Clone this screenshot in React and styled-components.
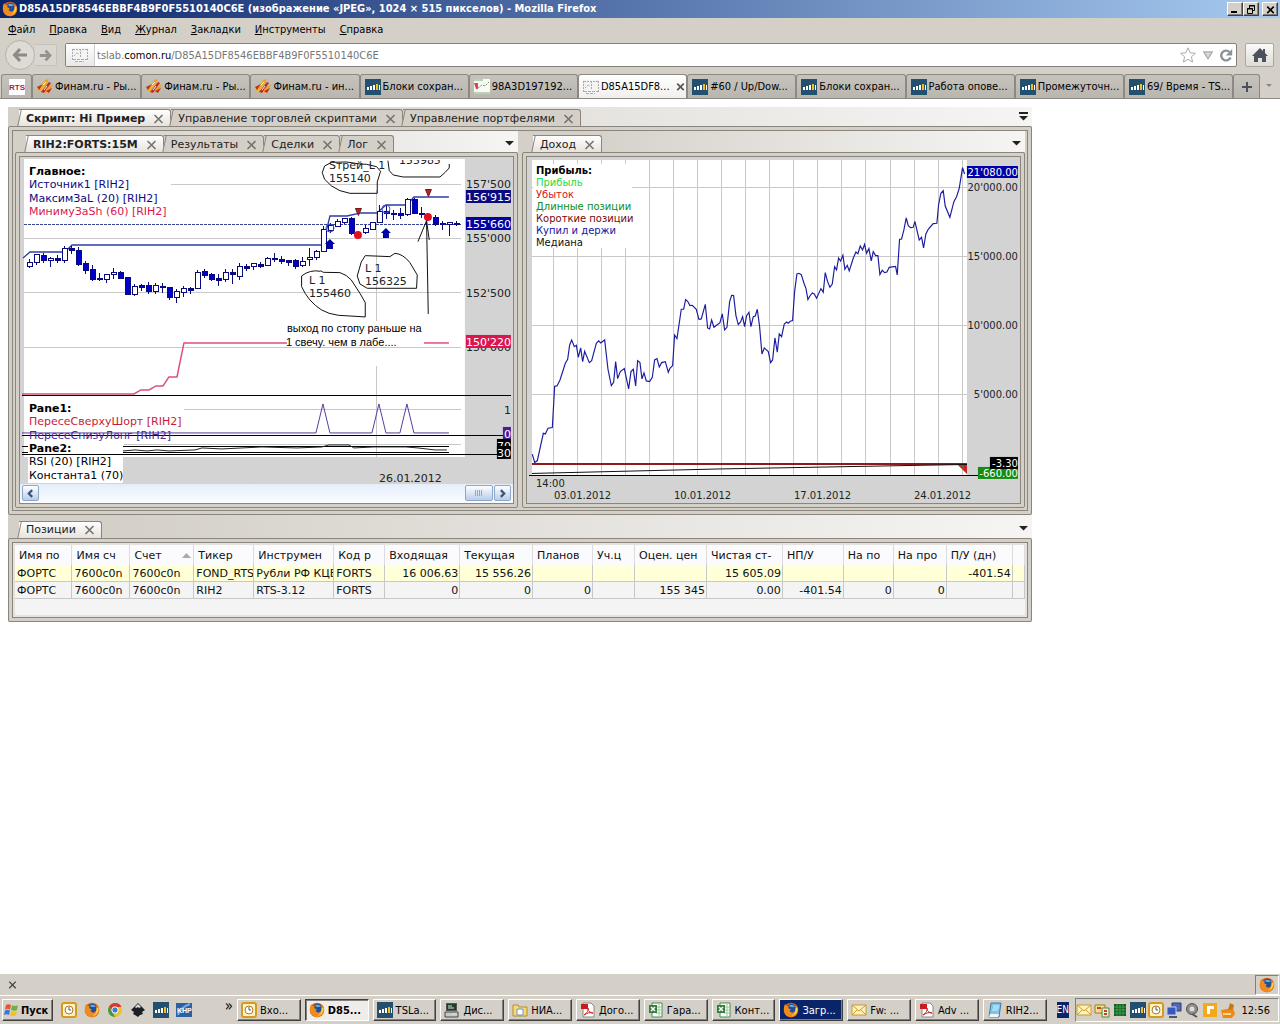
import React from 'react';
import styled, { createGlobalStyle, css } from 'styled-components';

const colors = {
  face: '#d4d0c8',
  edge: '#8a867e',
  dark: '#404040',
  navy: '#0a246a',
  axis: '#d3d3d3',
  grid: '#c8c8c8',
  blue: '#0000a8',
  deepBlue: '#0a0a80',
  crimson: '#dc1450',
};

const uiFont = '"DejaVu Sans Condensed", "Liberation Sans", sans-serif';
const appFont = '"DejaVu Sans", sans-serif';

const GlobalStyle = createGlobalStyle`
  * {
    box-sizing: border-box;
  }
  body {
    margin: 0;
    background: #fff;
    font-family: ${uiFont};
    font-size: 11px;
    color: #000;
  }
  button, input {
    font: inherit;
    color: inherit;
  }
  button {
    cursor: pointer;
  }
  svg {
    display: block;
    flex: none;
  }
`;

const raised = css`
  border: 1px solid;
  border-color: #fff ${colors.dark} ${colors.dark} #fff;
  box-shadow: inset -1px -1px 0 #808080;
`;

const sunken = css`
  border: 1px solid;
  border-color: #808080 #fff #fff #808080;
`;

const Page = styled.div`
  display: flex;
  flex-direction: column;
  min-height: 100vh;
`;

/* ---------- browser window ---------- */

const TitleBar = styled.header`
  display: flex;
  align-items: center;
  gap: 1px;
  height: 18px;
  padding: 0 2px;
  background: linear-gradient(90deg, ${colors.navy}, #a6caf0);
`;

const WindowTitle = styled.h1`
  flex: 1;
  margin: 0;
  overflow: hidden;
  font-size: 11px;
  line-height: 18px;
  white-space: nowrap;
  color: #fff;
`;

const WindowButtons = styled.div`
  display: flex;
`;

const WindowButton = styled.button`
  display: flex;
  align-items: center;
  justify-content: center;
  width: 16px;
  height: 14px;
  padding: 0;
  margin-left: ${({ $apart }) => ($apart ? 3 : 0)}px;
  background: ${colors.face};
  ${raised};
`;

const MenuBar = styled.nav`
  display: flex;
  height: 24px;
  padding: 0 1px;
  background: ${colors.face};
`;

const MenuItem = styled.button`
  padding: 0 7px;
  border: 0;
  background: none;
  line-height: 22px;
`;

const NavBar = styled.div`
  display: flex;
  align-items: flex-start;
  gap: 8px;
  height: 32px;
  padding: 1px 6px 0 5px;
  background: ${colors.face};
`;

const HistoryButtons = styled.div`
  display: flex;
  align-items: center;
  height: 24px;
`;

const HistoryButton = styled.button`
  display: flex;
  align-items: center;
  justify-content: center;
  padding: 0;
  width: ${({ $back }) => ($back ? 30 : 22)}px;
  height: ${({ $back }) => ($back ? 30 : 22)}px;
  border: 1px solid ${({ $back }) => ($back ? '#b5b2ac' : '#c6c2bb')};
  border-left-width: ${({ $back }) => ($back ? 1 : 0)}px;
  border-radius: ${({ $back }) => ($back ? '50%' : '0 2px 2px 0')};
  background: ${({ $back }) => ($back ? '#dedbd5' : '#d9d6cf')};
`;

const AddressBar = styled.div`
  display: flex;
  flex: 1;
  align-items: center;
  height: 24px;
  border: 1px solid #84817b;
  border-radius: 2px;
  background: #fff;
`;

const SiteIdentity = styled.span`
  display: flex;
  align-items: center;
  justify-content: center;
  width: 29px;
  height: 22px;
  border-right: 1px solid #ccc;
  background: linear-gradient(#fff, #e8e8e8);
`;

const Address = styled.div`
  flex: 1;
  padding: 0 2px;
  color: #777;

  b {
    font-weight: normal;
    color: #000;
  }
`;

const AddressTools = styled.div`
  display: flex;
  align-items: center;
  gap: 7px;
  padding-right: 3px;
`;

const HomeButton = styled.button`
  display: flex;
  align-items: center;
  justify-content: center;
  width: 29px;
  height: 24px;
  padding: 0;
  border: 1px solid #aaa7a1;
  border-radius: 2px;
  background: linear-gradient(#fafafa, #dedbd5);
`;

const BrowserTabs = styled.div`
  display: flex;
  height: 25px;
  padding: 0 2px 0 1px;
  border-bottom: 1px solid #8c8983;
  background: ${colors.face};
`;

const BrowserTab = styled.button`
  display: flex;
  flex: ${({ $pinned }) => ($pinned ? 'none' : '1 1 0')};
  align-items: center;
  justify-content: ${({ $pinned }) => ($pinned ? 'center' : 'flex-start')};
  gap: 2px;
  min-width: 0;
  width: ${({ $pinned }) => $pinned || 'auto'};
  padding: ${({ $pinned }) => ($pinned ? '0' : '0 1px 0 4px')};
  border: 1px solid #8c8983;
  border-bottom: 0;
  border-radius: 3px 3px 0 0;
  background: ${({ $active }) =>
    $active ? 'linear-gradient(#fff, #f0efec)' : 'linear-gradient(#c6c3bd, #b9b6b0)'};
  white-space: nowrap;

  span {
    flex: 1;
    text-align: left;
  }
`;

const TabListArrow = styled.button`
  display: flex;
  align-items: center;
  justify-content: center;
  width: 18px;
  padding: 0;
  border: 0;
  background: none;
`;

const Viewport = styled.main`
  flex: 1;
  padding: 8px;
  background: #fff;
`;

const AddonBar = styled.div`
  display: flex;
  align-items: center;
  justify-content: space-between;
  height: 21px;
  padding: 0 1px 0 8px;
  background: ${colors.face};
`;

const PlainButton = styled.button`
  display: flex;
  align-items: center;
  justify-content: center;
  padding: 0;
  border: 0;
  background: none;
`;

const AddonButton = styled(PlainButton)`
  width: 24px;
  height: 20px;
  ${sunken};
`;

/* ---------- trading terminal ---------- */

const Terminal = styled.section`
  width: 81%;
  background: ${colors.face};
  font-family: ${appFont};
  color: #222;
`;

const Strip = styled.div`
  display: flex;
  align-items: flex-end;
  height: ${({ $height }) => $height}px;
  padding: 0 4px 0 11px;
  background: linear-gradient(90deg, ${colors.face} 10%, #f6f5f4);
`;

const DockTab = styled.button`
  position: relative;
  display: flex;
  align-items: center;
  gap: 8px;
  height: 17px;
  padding: 0 6px 0 7px;
  border: 1px solid ${colors.edge};
  border-width: 1px 1px 0 0;
  border-radius: 0 3px 0 0;
  background: ${({ $active }) => ($active ? 'linear-gradient(#fff, #e6e3de)' : colors.face)};
  font-weight: ${({ $bold }) => ($bold ? 'bold' : 'normal')};
  line-height: 15px;
  white-space: nowrap;

  &::before {
    content: '';
    position: absolute;
    top: 0;
    bottom: 0;
    left: 0;
    width: 3px;
    border-left: 1px solid ${colors.edge};
    background: inherit;
    transform: skewX(-12deg);
  }
`;

const StripMenu = styled(PlainButton)`
  align-self: center;
  margin-left: auto;
`;

const Frame = styled.div`
  padding: 3px;
  border: 1px solid ${colors.edge};
  border-radius: 2px;
  background: ${colors.face};
`;

const FrameInner = styled.div`
  padding: ${({ $pad }) => $pad || 0};
  border: 1px solid ${colors.edge};
  background: ${({ $fill }) => $fill || colors.face};
`;

const Columns = styled.div`
  display: grid;
  grid-template-columns: 1fr 1fr;
  gap: 4px;
`;

const Chart = styled.svg`
  width: 100%;
  height: auto;
  font-family: ${appFont};
  font-size: ${({ $size }) => $size}px;
`;

const ScrollTrack = styled.div`
  display: flex;
  align-items: center;
  justify-content: space-between;
  height: 19px;
  padding: 0 2px;
  background: linear-gradient(#e4eefb, #fafcff);
`;

const ScrollGroup = styled.div`
  display: flex;
  gap: 1px;
`;

const ScrollButton = styled.button`
  display: flex;
  align-items: center;
  justify-content: center;
  width: ${({ $wide }) => ($wide ? 28 : 17)}px;
  height: 16px;
  padding: 0;
  border: 1px solid #8ea6c8;
  border-radius: 2px;
  background: linear-gradient(#fff, #b8cdea);
`;

const GridArea = styled.div`
  padding-bottom: 16px;
  background: #f4f4f4;
`;

const Grid = styled.table`
  width: 100%;
  table-layout: fixed;
  border-collapse: collapse;
  color: #111;
`;

const HeadCell = styled.th`
  height: 20px;
  padding: 2px 2px 0 4px;
  overflow: hidden;
  border-right: 1px solid #dcdcdc;
  background: #fbfbfd;
  font-weight: normal;
  text-align: left;
  white-space: nowrap;

  svg {
    float: right;
    margin-top: 4px;
  }
`;

const Row = styled.tr`
  background: ${({ $selected }) => ($selected ? '#ffffd8' : '#f4f4f4')};
`;

const Cell = styled.td`
  height: 17px;
  padding: 2px 1px 0 2px;
  overflow: hidden;
  border: 1px solid #c8c8c8;
  border-width: 0 1px 1px 0;
  line-height: 14px;
  text-align: ${({ $number }) => ($number ? 'right' : 'left')};
  white-space: nowrap;
`;

/* ---------- taskbar ---------- */

const Taskbar = styled.footer`
  display: flex;
  align-items: center;
  height: 29px;
  padding: 0 1px 0 2px;
  border-top: 1px solid #fff;
  background: ${colors.face};
`;

const StartButton = styled.button`
  display: flex;
  align-items: center;
  gap: 1px;
  height: 22px;
  width: 51px;
  padding: 0 1px;
  background: ${colors.face};
  font-size: 11px;
  font-weight: bold;
  ${raised};
`;

const QuickLaunch = styled.div`
  display: flex;
  align-items: center;
  gap: 7px;
  width: 184px;
  padding-left: 8px;
`;

const More = styled(PlainButton)`
  margin-left: auto;
  padding: 0 4px 8px 0;
  font-size: 15px;
  line-height: 12px;
`;

const Tasks = styled.div`
  display: flex;
  flex: 1;
  gap: 4px;
  min-width: 0;
`;

const Task = styled.button`
  display: flex;
  flex: 1 1 0;
  align-items: center;
  gap: 3px;
  min-width: 0;
  height: 22px;
  padding: 0 3px;
  overflow: hidden;
  background: ${({ $alert }) => ($alert ? colors.navy : colors.face)};
  color: ${({ $alert }) => ($alert ? '#fff' : '#000')};
  white-space: nowrap;
  ${raised};
  ${({ $active }) =>
    $active &&
    css`
      border-color: ${colors.dark} #fff #fff ${colors.dark};
      box-shadow: inset 1px 1px 0 #808080;
      background: #efedea;
      font-weight: bold;
    `};
`;

const Language = styled.span`
  margin: 0 6px 0 10px;
  background: ${colors.navy};
  color: #fff;
  font-size: 10px;
  line-height: 16px;
`;

const Tray = styled.div`
  display: flex;
  align-items: center;
  gap: 2px;
  width: 204px;
  height: 24px;
  padding: 0 8px 0 0;
  ${sunken};

  time {
    margin-left: auto;
  }
`;

/* ---------- icons ---------- */

const Icon = ({ size = 16, children }) => (
  <svg width={size} height={size} viewBox="0 0 16 16" aria-hidden="true">
    {children}
  </svg>
);

const icons = {
  firefox: (
    <>
      <circle cx="8" cy="8" r="7.3" fill="#d9620c" />
      <circle cx="8.4" cy="6.4" r="4.6" fill="#1d4f9c" />
      <path d="M6 3.6c2-1.7 5-.8 6 1.3-1.600-.6-2 .4-3.300.2S6.600 5 6 3.600z" fill="#69a7dc" />
      <path d="M1 5l1-3 1.500 2L6 4.200 5 6l2.800 1.600L6.500 9l2 1.600c2.200.3 4.200-1.600 4.100-4.400L12 3l2.500 2.600c1.600 5-2 9.500-6.500 9.600C3 15.100.300 10.500 1 5z" fill="#f08a1c" />
      <path d="M14.300 5.400c.9 4-1.600 7.600-5.500 8.300 2.500-1.600 4.200-3.700 3.700-7.500z" fill="#ffd24a" />
    </>
  ),
  finam: (
    <>
      <path d="M0 11l9-10 2 1-7 11z" fill="#e8b428" />
      <path d="M4 13l8-10 2 1-7 10z" fill="#c8282c" />
      <path d="M8 1l4-1-3 6-2-2zM9 10l7-5-2 5-5 4z" fill="#e9a51c" />
      <path d="M0 8l6-3-4 6zM9 12l6-3-3 5z" fill="#c03020" />
      <path d="M6 6l3-3M7 11l3-4" stroke="#fff4dc" />
    </>
  ),
  tslab: (
    <>
      <path d="M0 0h16v16H0z" fill="#22506e" />
      <path d="M2 8h2v3H2zM5 7h2v4H5zM8 6h2v5H8zM14 6h1v5h-1z" fill="#fff" />
      <path d="M11 5h2v6h-2z" fill="#f0c020" />
    </>
  ),
  picture: (
    <>
      <path d="M0 1h16v13H0z" fill="#f4f4f4" />
      <path d="M1 2.500h14M8.500 2v9M2 9l3-3 2 1M15.500 2v11M.500 2v11" fill="none" stroke="#aaa" strokeDasharray="2 1" />
      <path d="M1 12.500h14M3 14.500h9" stroke="#aaa" strokeDasharray="3 1" />
    </>
  ),
  graph: (
    <>
      <path d="M0 0h16v15H0z" fill="#f8faf4" />
      <path d="M0 4h4v6H2z" fill="#d84848" />
      <path d="M4 9l4-3 3 1 4-4" fill="none" stroke="#7d9c78" strokeDasharray="2 1" />
      <path d="M0 1h9M0 14h16" stroke="#7aa874" />
    </>
  ),
  outlook: (
    <>
      <rect x="1" y="1" width="14" height="14" rx="2" fill="#fff3c4" stroke="#d79a20" strokeWidth="2" />
      <circle cx="8" cy="8" r="4" fill="#fff" stroke="#a87824" />
      <path d="M8 5v3h2" fill="none" stroke="#555" />
    </>
  ),
  chrome: (
    <>
      <circle cx="8" cy="8" r="7" fill="#e8c32c" />
      <path d="M2 4.500A7 7 0 0 1 14.500 5H8L5 9z" fill="#d8382c" />
      <path d="M2 4.500l3.500 5.500L8 15A7 7 0 0 1 2 4.500z" fill="#3a9c48" />
      <circle cx="8" cy="8" r="3.200" fill="#3c7cd0" stroke="#fff" />
    </>
  ),
  inkscape: (
    <>
      <path d="M8 1l7 7-3 2 1 2-3 1-2 2-3-2-2-1 1-2-3-2z" fill="#1c2024" />
      <path d="M8 2l3 3-2 1-1-1-2 1-1-1z" fill="#d8e0e8" />
    </>
  ),
  khp: (
    <>
      <path d="M0 1h16v14H0z" fill="#2a62a4" />
      <path d="M2 13C4 7 8 4 14 2" fill="none" stroke="#7cacdc" strokeWidth="2" />
      <text x="1" y="11" fill="#fff" fontFamily="Liberation Sans" fontSize="7" fontWeight="bold">KHP</text>
    </>
  ),
  computer: (
    <>
      <path d="M2 1h11v8H2z" fill="#555" />
      <path d="M3 2h9v6H3z" fill="#1d3d2d" />
      <path d="M1 10h13v5H1z" fill="#c8c8c8" stroke="#444" />
      <path d="M4 4h4M4 6h6M8 12h5" stroke="#d7e8d7" />
    </>
  ),
  folder: (
    <>
      <path d="M1 3h5l1 2h8v9H1z" fill="#f6d978" stroke="#b98d20" />
      <path d="M5 7h6v6H5z" fill="#fff" stroke="#679bc8" />
    </>
  ),
  pdf: (
    <>
      <path d="M3 1h8l3 3v11H3z" fill="#fff" stroke="#888" />
      <path d="M1 2h7v5H1z" fill="#c81c1c" />
      <path d="M4 13c3-2 5-5 4-7-1 2 2 5 5 5-3-1-6 0-9 2z" fill="none" stroke="#c81c1c" />
    </>
  ),
  excel: (
    <>
      <path d="M4 1h10v14H4z" fill="#fff" stroke="#4a8a50" />
      <path d="M8 5h6M8 8h6M8 11h6M11 2v12" stroke="#9cc49c" />
      <path d="M1 3h8v8H1z" fill="#2f8038" />
      <path d="M3 5l4 4M7 5L3 9" stroke="#fff" strokeWidth="1.500" />
    </>
  ),
  mail: (
    <>
      <path d="M1 3h14v10H1z" fill="#fff2b8" stroke="#c99a30" />
      <path d="M1 3l7 6 7-6M1 13l5-5M15 13l-5-5" fill="none" stroke="#c99a30" />
    </>
  ),
  note: (
    <>
      <path d="M4 1h10l-2 14H2z" fill="#7cc4e8" stroke="#3c7ca8" />
      <path d="M6 4h6M6 6h6M5 8h6" stroke="#d8f0fc" />
      <path d="M3 12h9l-1 3H2z" fill="#eef6fa" />
    </>
  ),
  windows: (
    <>
      <path d="M2 3c2-1 3-1 5 0L6 7.500c-2-1-3-1-5 0z" fill="#e8522c" />
      <path d="M8 3.300c2 1 4 1 6 0L13 8c-2 1-4 1-6 0z" fill="#68b43c" />
      <path d="M1 8.500c2-1 3-1 5 0L5 13c-2-1-3-1-5 0z" fill="#3c78d0" />
      <path d="M7 9c2 1 4 1 6 0l-1 4.500c-2 1-4 1-6 0z" fill="#f0c030" />
    </>
  ),
  keys: (
    <>
      <path d="M1 3h10v8H1z" fill="#f6e084" stroke="#a07820" />
      <path d="M8 6h7v9H8z" fill="#e8f0d0" stroke="#508838" />
      <path d="M3 6h4M10 9h3M10 12h3" stroke="#c84030" strokeWidth="2" />
    </>
  ),
  board: (
    <>
      <path d="M2 2h12v12H2z" fill="#145c20" />
      <path d="M2 5h12M2 8h12M2 11h12M5 2v12M8 2v12M11 2v12" stroke="#3ca048" />
    </>
  ),
  network: (
    <>
      <path d="M6 1h9v8H6z" fill="#5068b8" stroke="#303c70" />
      <path d="M1 5h9v8H1z" fill="#3858c0" stroke="#c8d0e8" />
      <path d="M3 15h8" stroke="#505868" strokeWidth="2" />
    </>
  ),
  sound: (
    <>
      <circle cx="8" cy="7" r="5.500" fill="#8c8c8c" stroke="#555" />
      <circle cx="8" cy="7" r="2.500" fill="#ddd" />
      <path d="M8 12l5 3" stroke="#555" strokeWidth="2" />
    </>
  ),
  card: (
    <>
      <path d="M1 1h14v14H1z" fill="#f4a81c" />
      <path d="M5 4h7v3H8v5H5z" fill="#fff" />
    </>
  ),
  bag: (
    <>
      <path d="M1 8l12-2 2 6-3 4H3z" fill="#f08818" />
      <path d="M8 8l2-7 4 2-1 4z" fill="#c87810" />
      <path d="M3 12h8" stroke="#ffd890" strokeWidth="2" />
    </>
  ),
  rts: (
    <>
      <path d="M0 0h16v16H0z" fill="#fff" />
      <text x="0" y="11" fill="#b8183c" fontFamily="Liberation Sans" fontSize="8" fontWeight="bold">RTS</text>
    </>
  ),
};

const Cross = ({ size = 11, color = '#76726c', width = 1.6 }) => (
  <svg width={size} height={size} viewBox="0 0 11 11" aria-hidden="true">
    <path d="M1.500 2l8 8M9.500 2l-8 8" stroke={color} strokeWidth={width} />
  </svg>
);

const Down = ({ double }) => (
  <svg width="9" height="9" viewBox="0 0 9 9" fill="#222" aria-hidden="true">
    {double && <path d="M0 0h9v2H0z" />}
    <path d="M0 4h9L4.500 8.500z" />
  </svg>
);

/* ---------- data ---------- */

const menu = ['Файл', 'Правка', 'Вид', 'Журнал', 'Закладки', 'Инструменты', 'Справка'];

const browserTabs = [
  ['finam', 'Финам.ru - Ры...'],
  ['finam', 'Финам.ru - Ры...'],
  ['finam', 'Финам.ru - ин...'],
  ['tslab', 'Блоки сохран...'],
  ['graph', '98A3D197192...'],
  ['picture', 'D85A15DF8...', true],
  ['tslab', '#60 / Up/Dow...'],
  ['tslab', 'Блоки сохран...'],
  ['tslab', 'Работа опове...'],
  ['tslab', 'Промежуточн...'],
  ['tslab', '69/ Время - TS...'],
];

const tasks = [
  ['outlook', 'Вхо...'],
  ['firefox', 'D85...', 'active'],
  ['tslab', 'TSLa...'],
  ['computer', 'Дис...'],
  ['folder', 'НИА...'],
  ['pdf', 'Дого...'],
  ['excel', 'Гара...'],
  ['excel', 'Конт...'],
  ['firefox', 'Загр...', 'alert'],
  ['mail', 'Fw: ...'],
  ['pdf', 'Adv ...'],
  ['note', 'RIH2...'],
];

const trayIcons = ['mail', 'keys', 'board', 'tslab', 'outlook', 'network', 'sound', 'card', 'bag'];

const columns = [
  ['Имя по', 57], ['Имя сч', 58], ['Счет', 64], ['Тикер', 60], ['Инструмен', 80], ['Код р', 51],
  ['Входящая', 75], ['Текущая', 73], ['Планов', 60], ['Уч.ц', 42], ['Оцен. цен', 72], ['Чистая ст-', 76],
  ['НП/У', 61], ['На по', 50], ['На про', 53], ['П/У (дн)', 66], ['', 12],
];

const rows = [
  ['ФОРТС', '7600c0n', '7600c0n', 'FOND_RTS', 'Рубли РФ КЦБ', 'FORTS', '16 006.63', '15 556.26', '', '', '', '15 605.09', '', '', '', '-401.54', ''],
  ['ФОРТС', '7600c0n', '7600c0n', 'RIH2', 'RTS-3.12', 'FORTS', '0', '0', '0', '', '155 345', '0.00', '-401.54', '0', '0', '', ''],
];

// high, body top, body bottom, low, filled; one candle every 7px
const candles = [
  [259, 262, 266, 267, 0], [254, 254, 262, 264, 0], [253, 255, 260, 262, 1], [257, 258, 260, 266, 0],
  [255, 258, 260, 262, 1], [246, 248, 260, 262, 0], [246, 248, 250, 253, 1], [247, 250, 264, 265, 1],
  [261, 263, 270, 273, 1], [265, 269, 279, 280, 1], [273, 278, 279, 280, 1], [274, 274, 279, 282, 0],
  [268, 272, 274, 278, 0], [271, 272, 278, 278, 1], [277, 277, 294, 294, 1], [284, 286, 294, 295, 0],
  [284, 285, 287, 290, 1], [282, 285, 291, 293, 1], [283, 285, 291, 293, 0], [283, 286, 287, 292, 1],
  [287, 287, 297, 299, 1], [289, 291, 297, 302, 0], [286, 288, 292, 296, 0], [287, 288, 290, 293, 1],
  [270, 272, 288, 288, 0], [269, 271, 275, 277, 1], [273, 274, 279, 280, 1], [274, 278, 280, 285, 1],
  [269, 272, 279, 281, 0], [269, 272, 274, 283, 1], [263, 266, 276, 279, 0], [264, 266, 268, 270, 1],
  [263, 263, 266, 269, 0], [262, 264, 266, 267, 1], [257, 258, 265, 265, 0], [253, 258, 259, 261, 1],
  [256, 259, 261, 263, 1], [260, 260, 262, 265, 1], [259, 260, 266, 268, 1], [257, 261, 265, 266, 0],
  [248, 257, 259, 265, 0], [250, 251, 257, 259, 0], [226, 229, 251, 251, 0], [223, 225, 230, 232, 0],
  [219, 221, 226, 226, 0], [218, 218, 222, 223, 0], [217, 218, 233, 234, 1], null,
  [225, 228, 232, 233, 0], [222, 222, 229, 229, 0], [205, 211, 222, 222, 0], [205, 211, 213, 218, 1],
  [210, 213, 214, 219, 1], [208, 213, 215, 218, 1], [198, 199, 214, 215, 0], [198, 199, 213, 213, 1],
  [207, 213, 214, 217, 1], null, [215, 217, 224, 225, 1], [221, 223, 224, 229, 1],
  [222, 222, 224, 235, 0], [221, 223, 224, 225, 1],
];

const profit =
  '37,973 44,998 52,992 70,910 76,912 84,895 97,893 104,769 111,768 120,750 136,700 143,688 149,645 155,630 163,650 169,646 175,682 182,654 188,695 194,664 208,698 215,692 229,640 236,633 242,639 254,630 264,718 274,767 281,757 287,695 293,746 301,725 313,716 326,777 333,725 340,718 347,768 353,692 360,698 366,747 372,729 379,753 389,755 397,742 404,690 411,686 418,711 425,698 436,695 445,727 450,715 458,707 464,615 471,626 484,538 491,538 497,509 503,514 510,527 517,526 529,538 537,568 544,567 556,523 563,594 569,597 575,570 582,592 600,578 607,552 614,600 621,592 629,515 635,496 641,497 648,557 655,584 662,576 668,560 674,590 680,557 687,547 693,590 700,560 706,558 712,538 719,590 726,672 733,654 745,665 752,698 758,690 765,624 772,667 778,612 785,620 793,582 800,576 805,580 811,574 818,572 824,485 831,432 837,430 844,434 853,462 858,475 864,509 870,498 877,489 883,492 890,505 903,476 910,487 916,428 923,455 930,472 937,462 944,410 950,420 956,384 962,393 969,376 975,418 982,406 988,423 1000,385 1008,366 1014,371 1021,348 1028,360 1034,343 1040,370 1047,356 1054,393 1060,365 1067,377 1074,377 1080,434 1087,421 1094,428 1101,426 1108,412 1127,409 1132,435 1139,328 1145,327 1152,300 1159,264 1165,287 1172,293 1180,292 1185,274 1198,330 1205,322 1211,354 1218,312 1225,298 1240,281 1251,280 1256,225 1263,190 1270,182 1276,228 1290,262 1302,215 1310,200 1318,175 1328,113 1334,132';

const profitLegend = [
  ['Прибыль', '#22dc3c'],
  ['Убыток', '#d01818'],
  ['Длинные позиции', '#0c8c1c'],
  ['Короткие позиции', '#780808'],
  ['Купил и держи', '#1414a0'],
  ['Медиана', '#111'],
];

/* ---------- charts ---------- */

const Candle = ({ x, data: [high, top, bottom, low, filled] }) => (
  <g stroke={colors.deepBlue} shapeRendering="crispEdges">
    <path d={`M${x + 0.5} ${high}V${low + 1}`} />
    <rect
      x={x - 2 + 0.5}
      y={top + 0.5}
      width="5"
      height={Math.max(bottom - top, 1)}
      fill={filled ? '#0000c8' : '#fff'}
    />
  </g>
);

const PriceTag = ({ x, y, width, height = 13, fill, right, children }) => (
  <>
    <rect x={x} y={y} width={width} height={height} fill={fill} />
    <text x={right} y={y + height - 2} textAnchor="end" fill="#fff">{children}</text>
  </>
);

function PriceChart() {
  return (
    <Chart viewBox="20 157 493 327" $size={11} role="img" aria-label="RIH2:FORTS:15M">
      <path d="M20 157h493v327H20z" fill={colors.axis} />
      <path d="M24 159h441v298H24z" fill="#fff" />
      <g stroke={colors.grid} shapeRendering="crispEdges">
        <path d="M171 184.500H461M24 238.500H461M24 292.500H461M24 347.500H461M184 409.500H461M124 444.500H461" />
        <path d="M376.500 190V321M376.500 366V457" />
      </g>
      <path d="M24 224.500H461" stroke="#3c4696" strokeDasharray="3 1" shapeRendering="crispEdges" />
      <polyline
        points="23,258 30,252 65,252 72,245 323,245 330,216 347,216 361,213 377,213 386,205 407,205 414,197 449,197"
        fill="none"
        stroke="#2c3ca8"
        strokeWidth="1.300"
      />
      {candles.map((data, i) => data && <Candle key={i} x={29 + i * 7} data={data} />)}
      <g fill="none" stroke="#3c50c0">
        <circle cx="330" cy="228" r="4" />
        <circle cx="386" cy="209" r="4" />
      </g>
      <g fill={colors.blue}>
        <path d="M330 239l5 5h-2v5h-6v-5h-2zM386 228l5 5h-2v5h-6v-5h-2z" />
      </g>
      <g fill="#e01020">
        <circle cx="358" cy="235" r="4" />
        <circle cx="428" cy="217" r="4" />
      </g>
      <g fill="#b82028" stroke="#701818">
        <path d="M355.500 208.500h6l-3 7zM425.500 189.500h6l-3 7z" />
      </g>
      <polyline
        points="22,394 134,394 141,390 149,390 156,386 163,386 169,377 177,377 184,343 287,343"
        fill="none"
        stroke="#dc5078"
        strokeWidth="1.500"
      />
      <path d="M424 343H449" stroke="#dc5078" strokeWidth="1.500" />

      {/* pen marks over the price pane */}
      <g transform="translate(260 150) scale(0.3333)" fill="none" stroke="#111" strokeWidth="3" strokeLinejoin="round">
        <path d="M300 42L260 36L215 37L194 48L187 68L194 88L215 108L240 122L270 130H352L352 96L362 64L350 50L320 43L300 42" />
        <path d="M384 32L388 62L400 75L430 81H540L556 67L568 54V42" />
        <path d="M182 364Q150 358 125 378V410Q145 455 185 480Q205 492 235 496L316 501V458L300 430L274 390Q260 374 240 368L190 367L182 362" />
        <path d="M390 320L316 317L304 336L292 378L300 402L322 415H470L472 375L450 338Q430 312 405 310L390 320" />
        <path d="M505 492L500 214M474 275L500 212L508 270" />
      </g>
      <g fill="#222">
        <svg x="320" y="160" width="140" height="30" viewBox="320 160 140 30">
          <text x="329" y="169">Sтрей_L 1</text>
          <text x="399" y="164">155985</text>
          <text x="329" y="182">155140</text>
        </svg>
        <text x="309" y="284">L 1</text>
        <text x="309" y="297">155460</text>
        <text x="365" y="272">L 1</text>
        <text x="365" y="285">156325</text>
      </g>
      <g fontFamily="Liberation Sans, sans-serif" fontSize="11">
        <text x="287" y="332">выход по стопу раньше на</text>
        <text x="286" y="346">1 свечу. чем в лабе....</text>
      </g>

      {/* indicator panes */}
      <g stroke="#000" shapeRendering="crispEdges">
        <path d="M22 395.500H511M22 435.500H511M22 454.500H511" />
        <path d="M22 446.500H28M22 452.500H28M123 446.500H449M123 452.500H449" />
      </g>
      <polyline
        points="22,433 316,433 323,404 330,433 372,433 379,404 386,433 400,433 407,404 414,433 449,433"
        fill="none"
        stroke="#5a3c9c"
      />
      <path
        d="M123 451l12-1 12 1 10-1 12 1 26-1 7-2 20 1 40-2 35 1 25-1 7-2h20l5 3 20-1h32l12 1 17 2h12"
        fill="none"
        stroke="#222"
      />
      <g fill="#000">
        <text x="29" y="175" fontWeight="bold">Главное:</text>
        <text x="29" y="188" fill={colors.deepBlue}>Источник1 [RIH2]</text>
        <text x="29" y="202" fill={colors.deepBlue}>МаксимЗаL (20) [RIH2]</text>
        <text x="29" y="215" fill={colors.crimson}>МинимуЗаSh (60) [RIH2]</text>
        <text x="29" y="412" fontWeight="bold">Pane1:</text>
        <text x="29" y="425" fill="#c81c38">ПересеСверхуШорт [RIH2]</text>
        <text x="29" y="439" fill="#4c2894">ПересеСнизуЛонг [RIH2]</text>
        <path d="M28 455h95v28H28z" fill="#fff" />
        <path d="M28 441h46v13H28z" fill="#fff" />
        <text x="29" y="452" fontWeight="bold">Pane2:</text>
        <text x="29" y="465">RSI (20) [RIH2]</text>
        <text x="29" y="479">Константа1 (70)</text>
      </g>

      <g fill="#222">
        <text x="511" y="188" textAnchor="end">157'500</text>
        <text x="511" y="242" textAnchor="end">155'000</text>
        <text x="511" y="297" textAnchor="end">152'500</text>
        <text x="511" y="351" textAnchor="end">150'000</text>
        <text x="511" y="414" textAnchor="end">1</text>
        <text x="379" y="482">26.01.2012</text>
      </g>
      <PriceTag x={466} y={190} width={45} fill={colors.deepBlue} right={511}>156'915</PriceTag>
      <PriceTag x={466} y={217} width={45} fill="#0000a0" right={511}>155'660</PriceTag>
      <PriceTag x={466} y={335} width={45} fill={colors.crimson} right={511}>150'220</PriceTag>
      <PriceTag x={503} y={427} width={8} fill="#4c1c94" right={511}>0</PriceTag>
      <PriceTag x={497} y={439} width={14} fill="#000" right={511}>70</PriceTag>
      <PriceTag x={497} y={446} width={14} fill="#000" right={511}>30</PriceTag>
    </Chart>
  );
}

function ProfitChart() {
  const days = Array.from({ length: 18 }, (_, i) => 553 + i * 24 + (i > 13 ? 1 : 0));
  return (
    <Chart viewBox="527 157 493 346" $size={10} role="img" aria-label="Доход">
      <path d="M527 157h493v346H527z" fill={colors.axis} />
      <path d="M532 160h435v315H532z" fill="#fff" />
      <g stroke={colors.grid} shapeRendering="crispEdges">
        {days.map((x) => <path key={x} d={`M${x + 0.5} 160V475`} />)}
        {[187, 256, 325, 394].map((y) => <path key={y} d={`M532 ${y + 0.5}H967`} />)}
      </g>
      <path d="M533 164h99v84h-99z" fill="#fff" />
      <text x="536" y="174" fontWeight="bold">Прибыль:</text>
      {profitLegend.map(([label, fill], i) => (
        <text key={label} x="536" y={186 + i * 12} fill={fill}>{label}</text>
      ))}
      <polyline
        transform="translate(520 130) scale(0.3333)"
        points={profit}
        fill="none"
        stroke="#1c1ca0"
        strokeWidth="3.500"
      />
      <path d="M532 464H967" stroke="#8c1c1c" strokeWidth="2" />
      <path d="M532 473.500L720 469L967 464.500" fill="none" stroke="#111" />
      <path d="M958 465h9v9z" fill="#c82020" />
      <path d="M960 465l4 5v-5z" fill="#5c6c28" />
      <path d="M529 475.500H978" stroke="#000" shapeRendering="crispEdges" />
      <g fill="#222">
        <g textAnchor="end">
          <text x="1018" y="191">20'000.00</text>
          <text x="1018" y="260">15'000.00</text>
          <text x="1018" y="329">10'000.00</text>
          <text x="1018" y="398">5'000.00</text>
        </g>
        <text x="536" y="487">14:00</text>
        <text x="554" y="499">03.01.2012</text>
        <text x="674" y="499">10.01.2012</text>
        <text x="794" y="499">17.01.2012</text>
        <text x="914" y="499">24.01.2012</text>
      </g>
      <PriceTag x={967} y={166} width={51} height={12} fill={colors.blue} right={1018}>21'080.00</PriceTag>
      <PriceTag x={978} y={467} width={40} height={12} fill="#148c14" right={1018}>-660.00</PriceTag>
      <PriceTag x={990} y={457} width={28} height={12} fill="#000" right={1018}>-3.30</PriceTag>
    </Chart>
  );
}

/* ---------- page parts ---------- */

function DockStrip({ tabs, height = 21, bold, double }) {
  return (
    <Strip $height={height}>
      {tabs.map((label, i) => (
        <DockTab key={label} $active={i === 0} $bold={bold && i === 0}>
          {label}
          <Cross />
        </DockTab>
      ))}
      <StripMenu aria-label="Список вкладок"><Down double={double} /></StripMenu>
    </Strip>
  );
}

function Positions() {
  const total = columns.reduce((sum, [, width]) => sum + width, 0);
  return (
    <GridArea>
      <Grid>
        <colgroup>
          {columns.map(([label, width]) => <col key={label} width={`${(width / total) * 100}%`} />)}
        </colgroup>
        <thead>
          <tr>
            {columns.map(([label]) => (
              <HeadCell key={label}>
                {label === 'Счет' && (
                  <svg width="9" height="5" viewBox="0 0 9 5"><path d="M0 5h9L4.500 0z" fill="#aaa" /></svg>
                )}
                {label}
              </HeadCell>
            ))}
          </tr>
        </thead>
        <tbody>
          {rows.map((row, i) => (
            <Row key={i} $selected={i === 0}>
              {row.map((value, j) => <Cell key={j} $number={j > 5}>{value}</Cell>)}
            </Row>
          ))}
        </tbody>
      </Grid>
    </GridArea>
  );
}

function Browser() {
  return (
    <>
      <TitleBar>
        <Icon>{icons.firefox}</Icon>
        <WindowTitle>
          D85A15DF8546EBBF4B9F0F5510140C6E (изображение «JPEG», 1024 × 515 пикселов) - Mozilla Firefox
        </WindowTitle>
        <WindowButtons>
          <WindowButton aria-label="Свернуть">
            <svg width="10" height="9" viewBox="0 0 10 9"><path d="M1 6h6v2H1z" /></svg>
          </WindowButton>
          <WindowButton aria-label="Восстановить">
            <svg width="10" height="9" viewBox="0 0 10 9">
              <path d="M3.500 3V.500h5v5H7M3 1h6M1.500 3.500h5v5h-5zM1 4h6" fill="none" stroke="#000" />
            </svg>
          </WindowButton>
          <WindowButton $apart aria-label="Закрыть"><Cross size={9} color="#000" width={2} /></WindowButton>
        </WindowButtons>
      </TitleBar>
      <MenuBar>
        {menu.map((label) => (
          <MenuItem key={label}><u>{label[0]}</u>{label.slice(1)}</MenuItem>
        ))}
      </MenuBar>
      <NavBar>
        <HistoryButtons>
          <HistoryButton $back aria-label="Назад">
            <Icon><path d="M15 8H3M8 2L2.500 8 8 14" fill="none" stroke="#8e8b86" strokeWidth="3" /></Icon>
          </HistoryButton>
          <HistoryButton aria-label="Вперёд">
            <Icon size={13}><path d="M1 8h12M8 2l5.500 6L8 14" fill="none" stroke="#96938e" strokeWidth="3.500" /></Icon>
          </HistoryButton>
        </HistoryButtons>
        <AddressBar>
          <SiteIdentity><Icon>{icons.picture}</Icon></SiteIdentity>
          <Address>tslab.<b>comon.ru</b>/D85A15DF8546EBBF4B9F0F5510140C6E</Address>
          <AddressTools>
            <Icon>
              <path d="M8 .800l2.200 5 5.200.500-4 3.500 1.200 5.300L8 12.300l-4.600 2.800 1.200-5.300-4-3.500 5.200-.500z" fill="#fff" stroke="#aaa" />
            </Icon>
            <Icon size={10}><path d="M1 3h14L8 14z" fill="#d8d8d8" stroke="#aaa" strokeWidth="2" /></Icon>
            <Icon size={13}>
              <path d="M13 10.500A6 6 0 1 1 11.500 3.500" fill="none" stroke="#8c929c" strokeWidth="3" />
              <path d="M15 0v8H7z" fill="#8c929c" />
            </Icon>
          </AddressTools>
        </AddressBar>
        <HomeButton aria-label="Домой">
          <Icon>
            <path d="M8 1L0 9h2v6h4v-4h4v4h4V9h2l-3-3V2h-2v2z" fill="#4a5260" />
          </Icon>
        </HomeButton>
      </NavBar>
      <BrowserTabs>
        <BrowserTab $pinned="31px" aria-label="RTS"><Icon>{icons.rts}</Icon></BrowserTab>
        {browserTabs.map(([icon, label, active], i) => (
          <BrowserTab key={i} $active={active}>
            <Icon>{icons[icon]}</Icon>
            <span>{label}</span>
            {active && <Cross size={9} color="#555" width={2} />}
          </BrowserTab>
        ))}
        <BrowserTab $pinned="27px" aria-label="Новая вкладка">
          <Icon><path d="M8 3v10M3 8h10" stroke="#4a5260" strokeWidth="2" /></Icon>
        </BrowserTab>
        <TabListArrow aria-label="Список вкладок">
          <svg width="6" height="4" viewBox="0 0 6 4"><path d="M0 0h6L3 3z" fill="#888" /></svg>
        </TabListArrow>
      </BrowserTabs>
    </>
  );
}

function TerminalWindow() {
  return (
    <Terminal>
      <DockStrip
        height={19}
        bold
        double
        tabs={['Скрипт: Hi Пример', 'Управление торговлей скриптами', 'Управление портфелями']}
      />
      <Frame>
        <FrameInner $pad="0 2px 2px">
          <Columns>
            <div>
              <DockStrip bold tabs={['RIH2:FORTS:15M', 'Результаты', 'Сделки', 'Лог']} />
              <Frame>
                <FrameInner $fill={colors.axis}>
                  <PriceChart />
                  <ScrollTrack>
                    <ScrollButton aria-label="Влево">
                      <Icon size={9}><path d="M11 2L5 8l6 6" fill="none" stroke="#3c5478" strokeWidth="4" /></Icon>
                    </ScrollButton>
                    <ScrollGroup>
                      <ScrollButton $wide aria-label="Ползунок">
                        <svg width="9" height="6"><path d="M1.500 0v6M3.500 0v6M5.500 0v6M7.500 0v6" stroke="#8ea6c8" /></svg>
                      </ScrollButton>
                      <ScrollButton aria-label="Вправо">
                        <Icon size={9}><path d="M5 2l6 6-6 6" fill="none" stroke="#3c5478" strokeWidth="4" /></Icon>
                      </ScrollButton>
                    </ScrollGroup>
                  </ScrollTrack>
                </FrameInner>
              </Frame>
            </div>
            <div>
              <DockStrip tabs={['Доход']} />
              <Frame>
                <FrameInner $fill={colors.axis}><ProfitChart /></FrameInner>
              </Frame>
            </div>
          </Columns>
        </FrameInner>
      </Frame>
      <DockStrip height={23} tabs={['Позиции']} />
      <Frame>
        <FrameInner $pad="2px" $fill="#e4e2de"><Positions /></FrameInner>
      </Frame>
    </Terminal>
  );
}

export default function App() {
  return (
    <Page>
      <GlobalStyle />
      <Browser />
      <Viewport>
        <TerminalWindow />
      </Viewport>
      <AddonBar>
        <PlainButton aria-label="Закрыть панель"><Cross size={9} color="#444" /></PlainButton>
        <AddonButton aria-label="Firefox"><Icon>{icons.firefox}</Icon></AddonButton>
      </AddonBar>
      <Taskbar>
        <StartButton><Icon>{icons.windows}</Icon>Пуск</StartButton>
        <QuickLaunch>
          {['outlook', 'firefox', 'chrome', 'inkscape', 'tslab', 'khp'].map((name) => (
            <PlainButton key={name} aria-label={name}><Icon>{icons[name]}</Icon></PlainButton>
          ))}
          <More>»</More>
        </QuickLaunch>
        <Tasks>
          {tasks.map(([icon, label, state]) => (
            <Task key={label} $active={state === 'active'} $alert={state === 'alert'}>
              <Icon>{icons[icon]}</Icon>
              {label}
            </Task>
          ))}
        </Tasks>
        <Language>EN</Language>
        <Tray>
          {trayIcons.map((name) => <Icon key={name}>{icons[name]}</Icon>)}
          <time>12:56</time>
        </Tray>
      </Taskbar>
    </Page>
  );
}
